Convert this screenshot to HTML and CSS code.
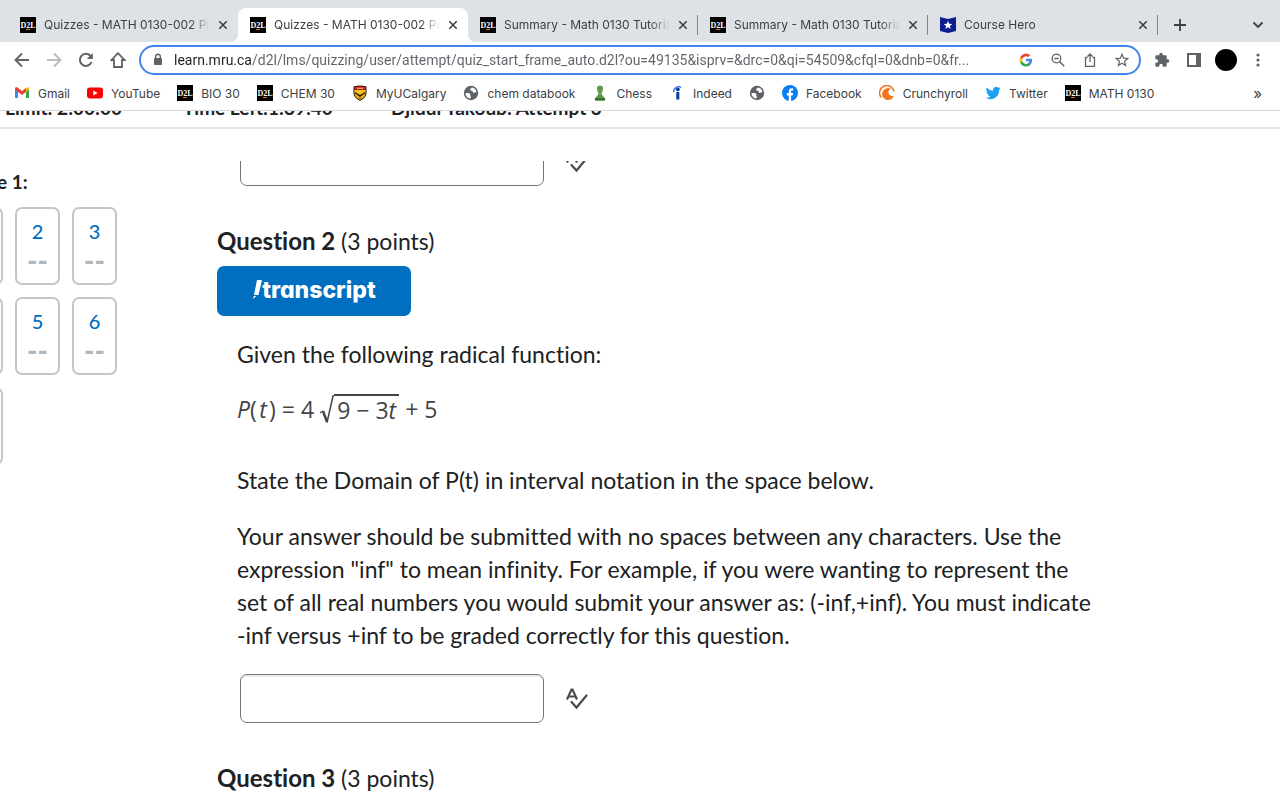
FILE: index.html
```html
<!DOCTYPE html>
<html lang="en">
<head>
  <meta charset="UTF-8" />
  <title>Quizzes - MATH 0130-002</title>
  <link rel="stylesheet" href="styles.css">
</head>
<body>

  <!-- Shared icons -->
  <svg class="sprite" aria-hidden="true">
    <symbol id="d2l" viewBox="0 0 16 16">
      <rect width="16" height="16" fill="#000"/>
      <text x="8" y="11" text-anchor="middle" font-family="Liberation Serif, serif" font-weight="bold" font-size="8" fill="#fff">D2L</text>
      <path d="M6 12.5h4" stroke="#e87511"/>
    </symbol>
    <symbol id="close" viewBox="0 0 10 10">
      <path d="M1.3 1.3l7.4 7.4M8.7 1.3L1.3 8.7" stroke="#3c4043" stroke-width="1.6"/>
    </symbol>
    <symbol id="globe" viewBox="0 0 16 16">
      <circle cx="8" cy="8" r="7.2" fill="#5f6368"/>
      <path d="M2.4 8.2c2.2-.4 4.2-.2 4.8.8.5 1-.4 1.5.3 2.3.6.7.3 1.7-.3 2.3C4.6 13.2 2.5 11 2.4 8.2zM8.8 2.5c-.2 1.2-1.8 1-1.7 2.2.1 1 1.5.6 2.2 1.3.7.6.3 1.6 1.3 1.9 1.1.3 1.4-.9 2.8-.8-.1-2.2-1.9-4.3-4.6-4.6z" fill="#fff"/>
    </symbol>
    <symbol id="spell" viewBox="0 0 24 24">
      <path d="M2 12.5L6.500 2.500h1L12 12.500M4 9.500h6" fill="none" stroke="#494c4e" stroke-width="2.2"/>
      <path d="M6.500 15l5 5.500L21.500 8.500" fill="none" stroke="#494c4e" stroke-width="2.2" stroke-linecap="round"/>
    </symbol>
  </svg>

  <!-- Tabs -->
  <nav class="tabs">
    <div class="tab">
      <svg class="favicon"><use href="#d2l"/></svg>
      <span class="tab-title">Quizzes - MATH 0130-002 Precalculus</span>
      <button class="close" aria-label="Close tab"><svg><use href="#close"/></svg></button>
    </div>
    <div class="tab active">
      <svg class="favicon"><use href="#d2l"/></svg>
      <span class="tab-title">Quizzes - MATH 0130-002 Precalculus</span>
      <button class="close" aria-label="Close tab"><svg><use href="#close"/></svg></button>
    </div>
    <div class="tab divided">
      <svg class="favicon"><use href="#d2l"/></svg>
      <span class="tab-title">Summary - Math 0130 Tutorial</span>
      <button class="close" aria-label="Close tab"><svg><use href="#close"/></svg></button>
    </div>
    <div class="tab divided">
      <svg class="favicon"><use href="#d2l"/></svg>
      <span class="tab-title">Summary - Math 0130 Tutorial</span>
      <button class="close" aria-label="Close tab"><svg><use href="#close"/></svg></button>
    </div>
    <div class="tab divided">
      <svg class="favicon" viewBox="0 0 16 16"><path d="M0 0l8 2 8-2v14l-8 2-8-2z" fill="#0c1f8f"/><path d="M8 3.800l1.200 2.900 3.100.2-2.400 2 .8 3L8 10.300l-2.700 1.600.8-3-2.400-2 3.100-.2z" fill="#fff"/></svg>
      <span class="tab-title">Course Hero</span>
      <button class="close" aria-label="Close tab"><svg><use href="#close"/></svg></button>
    </div>
    <button class="new-tab" aria-label="New tab"><svg viewBox="0 0 12 12"><path d="M6 0v12M0 6h12" stroke="#3c4043" stroke-width="1.8"/></svg></button>
    <button class="tab-search" aria-label="Search tabs"><svg viewBox="0 0 12 12"><path d="M1.500 3.500L6 8l4.500-4.500" fill="none" stroke="#3c4043" stroke-width="1.8"/></svg></button>
  </nav>

  <!-- Toolbar -->
  <div class="toolbar">
    <button class="tool" aria-label="Back"><svg viewBox="0 0 16 16"><path d="M15 8H2M8 1.500L1.500 8 8 14.500" fill="none" stroke="#5f6368" stroke-width="1.9"/></svg></button>
    <button class="tool" aria-label="Forward"><svg viewBox="0 0 16 16"><path d="M1 8h13M8 1.500L14.500 8 8 14.500" fill="none" stroke="#babcbe" stroke-width="1.9"/></svg></button>
    <button class="tool" aria-label="Reload"><svg viewBox="0 0 16 16"><path d="M13.500 10A6 6 0 1 1 12.300 3.800L14 5.500" fill="none" stroke="#5f6368" stroke-width="2"/><path d="M14.800 1v6h-6z" fill="#5f6368"/></svg></button>
    <button class="tool" aria-label="Home"><svg viewBox="0 0 16 16"><path d="M8 1.200L1.500 8H4v7h8V8h2.500z" fill="none" stroke="#5f6368" stroke-width="1.8"/></svg></button>
    <div class="omnibox">
      <svg class="lock" viewBox="0 0 10 14"><rect x="1" y="5" width="8" height="7" rx="1" fill="#5f6368"/><path d="M2.700 5.500V3.500a2.300 2.300 0 0 1 4.600 0v2" fill="none" stroke="#5f6368" stroke-width="1.4"/></svg>
      <input class="url" type="text" aria-label="Address" value="learn.mru.ca/d2l/lms/quizzing/user/attempt/quiz_start_frame_auto.d2l?ou=49135&amp;isprv=&amp;drc=0&amp;qi=54509&amp;cfql=0&amp;dnb=0&amp;fr...">
      <svg class="omni-icon" viewBox="0 0 24 24"><path d="M22.500 12.200c0-.8-.1-1.500-.2-2.200H12v4.300h5.900a5 5 0 0 1-2.200 3.300v2.800h3.600c2-1.900 3.200-4.800 3.200-8.200z" fill="#4285f4"/><path d="M12 23c3 0 5.500-1 7.300-2.600l-3.600-2.800a6.600 6.600 0 0 1-9.900-3.500H2.200V17A11 11 0 0 0 12 23z" fill="#34a853"/><path d="M5.800 14.100a6.600 6.600 0 0 1 0-4.200V7H2.200a11 11 0 0 0 0 9.900z" fill="#fbbc05"/><path d="M12 5.400c1.600 0 3.100.6 4.200 1.600l3.200-3.100A11 11 0 0 0 2.200 7l3.600 2.900A6.600 6.600 0 0 1 12 5.400z" fill="#ea4335"/></svg>
      <button class="omni-icon" aria-label="Zoom"><svg viewBox="0 0 14 14"><circle cx="5.500" cy="5.500" r="4.300" fill="none" stroke="#5f6368" stroke-width="1.3"/><path d="M8.700 8.700l4.600 4.600M3.300 5.500h4.400" stroke="#5f6368" stroke-width="1.5"/></svg></button>
      <button class="omni-icon" aria-label="Share"><svg viewBox="0 0 14 14"><path d="M4.500 4.500h-2v8.800h9V4.500h-2M7 9V1M4.500 3.500L7 1l2.500 2.500" fill="none" stroke="#5f6368" stroke-width="1.3"/></svg></button>
      <button class="omni-icon" aria-label="Bookmark"><svg viewBox="0 0 14 14"><path d="M7 1.300l1.600 3.900 4.200.3-3.200 2.700 1 4.200L7 10.200l-3.600 2.200 1-4.200L1.200 5.500l4.200-.3z" fill="none" stroke="#5f6368" stroke-width="1.2"/></svg></button>
    </div>
    <div class="actions">
      <button class="tool" aria-label="Extensions"><svg viewBox="0 0 24 24"><path d="M20.500 11H19V7a2 2 0 0 0-2-2h-4V3.500a2.500 2.500 0 0 0-5 0V5H4a2 2 0 0 0-2 2v3.800h1.500a2.700 2.700 0 0 1 0 5.400H2V20c0 1.100.9 2 2 2h3.800v-1.500a2.700 2.700 0 0 1 5.400 0V22H17a2 2 0 0 0 2-2v-4h1.500a2.500 2.500 0 0 0 0-5z" fill="#5f6368"/></svg></button>
      <button class="tool" aria-label="Side panel"><svg viewBox="0 0 16 16"><rect x="2" y="2" width="12" height="12" fill="none" stroke="#5f6368" stroke-width="2"/><path d="M10 2h4v12h-4z" fill="#5f6368"/></svg></button>
      <button class="avatar" aria-label="Profile"></button>
      <button class="tool" aria-label="Menu"><svg viewBox="0 0 16 16" fill="#5f6368"><circle cx="8" cy="3" r="1.600"/><circle cx="8" cy="8" r="1.600"/><circle cx="8" cy="13" r="1.600"/></svg></button>
    </div>
  </div>

  <!-- Bookmarks -->
  <nav class="bookmarks">
    <a href="#"><svg viewBox="0 0 16 16"><path d="M1 4v9h3V6z" fill="#4285f4"/><path d="M15 4v9h-3V6z" fill="#34a853"/><path d="M1 4.500V3.500C1 2.300 2.500 1.800 3.500 2.600L8 6l4-3v4L8 10 1 4.700z" fill="#ea4335"/><path d="M12 3l.5-.4c1-.8 2.500-.3 2.500 1v1L12 7z" fill="#fbbc04"/></svg>Gmail</a>
    <a href="#"><svg viewBox="0 0 16 16"><rect y="2.500" width="16" height="11" rx="3" fill="#f00"/><path d="M6.300 5.500v5l4.400-2.500z" fill="#fff"/></svg>YouTube</a>
    <a href="#"><svg><use href="#d2l"/></svg>BIO 30</a>
    <a href="#"><svg><use href="#d2l"/></svg>CHEM 30</a>
    <a href="#"><svg viewBox="0 0 16 16"><path d="M1.500 1.500Q8-.5 14.500 1.500V8c0 4-3.500 6-6.500 8-3-2-6.500-4-6.500-8z" fill="#3a1a12"/><path d="M2.500 2.300Q8 .7 13.500 2.300v2.400h-11z" fill="#d6202b"/><path d="M2.500 5h11v3c0 3-2.500 5-5.500 7-3-2-5.500-4-5.500-7z" fill="#f2c61f"/><path d="M3 7l5 3 5-3v1.500L8 12 3 8.500z" fill="#3a1a12"/><path d="M6 11.500l2 1.500 2-1.500L8 14.500z" fill="#b81b25"/><path d="M5 3.300h6" stroke="#f2c61f"/></svg>MyUCalgary</a>
    <a href="#"><svg><use href="#globe"/></svg>chem databook</a>
    <a href="#"><svg viewBox="0 0 16 16"><circle cx="8" cy="3.500" r="3" fill="#5d9948"/><path d="M4.500 6h7l-2 1.500c0 2 1 3.500 3 5V15.500h-9v-3c2-1.500 3-3 3-5z" fill="#5d9948"/><path d="M3 13h10v2.500H3z" fill="#3f6f34"/></svg>Chess</a>
    <a href="#"><svg viewBox="0 0 16 16"><circle cx="8.800" cy="4.300" r="1.900" fill="#003a9b"/><path d="M7.300 7h3v7.500h-3z" fill="#003a9b"/><path d="M4.500 7C5 2.500 8.500.5 12 2.500" fill="none" stroke="#2164f3" stroke-width="1.3"/></svg>Indeed</a>
    <a href="#" aria-label="Bookmark"><svg><use href="#globe"/></svg></a>
    <a href="#"><svg viewBox="0 0 16 16"><circle cx="8" cy="8" r="8" fill="#0a7cf5"/><path d="M6.800 16v-5.500H4.900V8h1.900V6.400c0-2 1.100-3.100 2.900-3.100.6 0 1.300.1 1.500.2v1.900h-1c-.9 0-1.100.5-1.100 1.100V8h2l-.4 2.500H9.100V16z" fill="#fff"/></svg>Facebook</a>
    <a href="#"><svg viewBox="0 0 16 16"><path d="M2.200 12.500A7.300 7.300 0 1 1 15 6.500" fill="none" stroke="#f47521" stroke-width="1.5"/><path d="M9 3a6 6 0 1 0 5.900 7.500A3.600 3.600 0 1 1 11.500 4 6 6 0 0 0 9 3z" fill="#f47521"/></svg>Crunchyroll</a>
    <a href="#"><svg viewBox="0 0 24 24"><path d="M23.500 5c-.8.400-1.700.6-2.600.7a4.600 4.600 0 0 0 2-2.500c-.9.500-1.900.9-2.900 1.100a4.600 4.600 0 0 0-7.900 4.200A13 13 0 0 1 2.600 3.700 4.600 4.600 0 0 0 4 9.900c-.7 0-1.400-.2-2-.6 0 2.300 1.600 4.200 3.700 4.600-.7.200-1.400.2-2.100.1a4.600 4.600 0 0 0 4.300 3.200A9.300 9.300 0 0 1 1 19.100 13.200 13.200 0 0 0 21.200 7.400c.9-.6 1.700-1.500 2.300-2.400z" fill="#1da1f2"/></svg>Twitter</a>
    <a href="#"><svg><use href="#d2l"/></svg>MATH 0130</a>
    <button class="more" aria-label="More bookmarks">»</button>
  </nav>

  <!-- Quiz page -->
  <header class="quiz-info">
    <div class="limit"><span>Time Limit: 2:00:00</span></div>
    <div class="left">Time Left:1:39:40</div>
    <div>Djidul Yakoub: Attempt 3</div>
  </header>

  <div class="quiz">
    <aside class="pages">
      <div class="pages-inner">
        <h3>Page 1:</h3>
        <div class="tiles">
          <a class="tile" href="#q1">1<span>--</span></a>
          <a class="tile" href="#q2">2<span>--</span></a>
          <a class="tile" href="#q3">3<span>--</span></a>
          <a class="tile" href="#q4">4<span>--</span></a>
          <a class="tile" href="#q5">5<span>--</span></a>
          <a class="tile" href="#q6">6<span>--</span></a>
          <a class="tile" href="#q7">7<span>--</span></a>
        </div>
      </div>
    </aside>

    <main class="questions">
      <div class="answer scrolled">
        <input type="text" aria-label="Answer for question 1">
        <button class="spell" aria-label="Check spelling"><svg><use href="#spell"/></svg></button>
      </div>

      <section id="q2">
        <h2>Question 2 <span>(3 points)</span></h2>
        <button class="transcript"><svg viewBox="0 0 10 20"><path d="M5 0h5L6.500 15H2z" fill="#fff"/><path d="M1.700 16h2.500L1.200 19z" fill="#fff"/></svg>transcript</button>
        <div class="body">
          <p>Given the following radical function:</p>
          <div class="formula">
            <span><i>P</i>(&#8202;<i>t</i>&#8202;)</span>
            <span>=</span>
            <span>4</span>
            <svg viewBox="0 0 14 30"><path d="M0 19l3-2" stroke="#444" stroke-width="1.2"/><path d="M3 17l4 11" stroke="#444" stroke-width="2.4"/><path d="M7 28.500L13 2h1" fill="none" stroke="#444" stroke-width="1.5"/></svg>
            <span class="radicand">9 − 3<i>t</i></span>
            <span>+</span>
            <span>5</span>
          </div>
          <p>State the Domain of P(t) in interval notation in the space below.</p>
          <p>Your answer should be submitted with no spaces between any characters. Use the expression "inf" to mean infinity. For example, if you were wanting to represent the set of all real numbers you would submit your answer as: (-inf,+inf). You must indicate -inf versus +inf to be graded correctly for this question.</p>
        </div>
        <div class="answer">
          <input type="text" aria-label="Answer for question 2">
          <button class="spell" aria-label="Check spelling"><svg><use href="#spell"/></svg></button>
        </div>
      </section>

      <section id="q3">
        <h2>Question 3 <span>(3 points)</span></h2>
      </section>
    </main>
  </div>

</body>
</html>
```
FILE: styles.css
```css
* {
  box-sizing: border-box;
}

body {
  margin: 0;
  height: 100vh;
  overflow: hidden;
  display: flex;
  flex-direction: column;
  background: #fff;
  color: #202122;
  font-family: Lato, sans-serif;
  font-variant-ligatures: none;
}

button {
  border: none;
  padding: 0;
  background: none;
  font: inherit;
  cursor: pointer;
}

.sprite {
  display: none;
}

/* Browser tabs */
.tabs {
  display: flex;
  flex-shrink: 0;
  height: 42px;
  padding: 8px 16px 0 8px;
  background: #dee1e6;
  font: 12px Inter, sans-serif;
  color: #3c4043;
}

.tab {
  position: relative;
  flex: 0 1 230px;
  min-width: 0;
  display: flex;
  align-items: center;
  gap: 8px;
  padding: 0 10px 1px 12px;
}

.tab.active {
  background: #fff;
  border-radius: 8px 8px 0 0;
}

.tab.active::before,
.tab.active::after {
  content: "";
  position: absolute;
  bottom: 0;
  width: 8px;
  height: 8px;
}

.tab.active::before {
  left: -8px;
  background: radial-gradient(circle at 0 0, transparent 8px, #fff 8px);
}

.tab.active::after {
  right: -8px;
  background: radial-gradient(circle at 100% 0, transparent 8px, #fff 8px);
}

.tab.divided {
  background: linear-gradient(#808387, #808387) right center / 1px 20px no-repeat;
}

.favicon {
  flex: none;
  width: 16px;
  height: 16px;
}

.tab-title {
  flex: 1;
  overflow: hidden;
  white-space: nowrap;
  mask-image: linear-gradient(to left, transparent, #000 20px);
}

.close svg {
  display: block;
  width: 10px;
  height: 10px;
}

.new-tab {
  margin-left: 16px;
}

.tab-search {
  margin-left: auto;
}

.new-tab svg,
.tab-search svg {
  display: block;
  width: 12px;
  height: 12px;
}

/* Toolbar */
.toolbar {
  display: flex;
  flex-shrink: 0;
  align-items: center;
  gap: 16px;
  height: 36px;
  padding: 0 14px;
}

.tool,
.tool svg {
  display: block;
  width: 16px;
  height: 16px;
}

.omnibox {
  flex: 1;
  min-width: 0;
  display: flex;
  align-items: center;
  gap: 18px;
  height: 30px;
  margin: 0 -3px;
  padding: 0 10px 0 12px;
  border: 2px solid #4285e8;
  border-radius: 15px;
}

.lock {
  flex: none;
  width: 10px;
  height: 14px;
}

.url {
  flex: 1;
  min-width: 0;
  margin-left: -7px;
  padding: 0;
  border: none;
  outline: none;
  font: 14px Roboto, sans-serif;
  color: transparent;
  background: linear-gradient(90deg, #202124 77px, #5f6368 77px);
  background-clip: text;
}

.omni-icon,
.omni-icon svg {
  display: block;
  flex: none;
  width: 14px;
  height: 14px;
}

.actions {
  display: flex;
  align-items: center;
  gap: 16px;
}

.avatar {
  width: 22px;
  height: 22px;
  margin: 0 -3px;
  border-radius: 50%;
  background: #000;
}

/* Bookmarks bar */
.bookmarks {
  display: flex;
  flex-shrink: 0;
  align-items: center;
  gap: 17px;
  height: 33px;
  padding: 0 18px 2px 14px;
  border-bottom: 1px solid #d5d8dc;
  font: 12px Inter, sans-serif;
}

.bookmarks a {
  display: flex;
  align-items: center;
  gap: 8px;
  color: #3c4043;
  text-decoration: none;
}

.bookmarks svg {
  width: 16px;
  height: 16px;
}

.more {
  margin-left: auto;
  font-size: 15px;
  color: #3c4043;
}

/* Quiz info, scrolled partly under the bookmarks bar */
.quiz-info {
  display: flex;
  flex-shrink: 0;
  align-items: flex-end;
  height: 18px;
  padding-bottom: 8px;
  overflow: hidden;
  border-bottom: 2px solid #dfe3e7;
  font-size: 19px;
  font-weight: bold;
  line-height: 22px;
  white-space: nowrap;
}

.limit {
  display: flex;
  justify-content: flex-end;
  width: 122px;
  margin-right: 61px;
}

.left {
  width: 208px;
}

.quiz {
  display: flex;
  flex: 1;
  min-height: 0;
}

/* Page navigation, scrolled partly off the left edge */
.pages {
  flex: none;
  display: flex;
  justify-content: flex-end;
  width: 117px;
  padding-top: 41px;
  overflow: hidden;
}

.pages-inner {
  flex: none;
}

.pages h3 {
  margin: 0 0 13px;
  padding-left: 8px;
  font-size: 19px;
  line-height: 24px;
}

.tiles {
  display: grid;
  grid-template-columns: repeat(3, 45px);
  gap: 12px;
}

.tile {
  display: flex;
  flex-direction: column;
  align-items: center;
  height: 78px;
  padding-top: 10px;
  border: 2px solid #c2c7cc;
  border-radius: 7px;
  color: #006fbf;
  font-size: 20px;
  font-weight: 500;
  line-height: 24px;
  text-decoration: none;
}

.tile span {
  margin-top: 5px;
  color: #b1b7bd;
  font-size: 28px;
  font-weight: 900;
}

/* Questions */
.questions {
  flex: 1;
  min-width: 0;
  padding: 32px 180px 0 100px;
}

.answer {
  display: flex;
  align-items: center;
  gap: 21px;
  padding-left: 23px;
}

.answer input {
  flex: none;
  width: 304px;
  height: 49px;
  padding: 0 16px;
  border: 1px solid #6e7477;
  border-radius: 7px;
  box-shadow: inset 0 2px 0 #eceef0;
  font: 22px Lato, sans-serif;
}

.answer.scrolled {
  align-items: flex-end;
  height: 25px;
  overflow: hidden;
}

.answer.scrolled .spell {
  margin-bottom: 12px;
}

.spell,
.spell svg {
  display: block;
  width: 24px;
  height: 24px;
}

h2 {
  margin: 38px 0 8px;
  font-size: 24px;
  line-height: 33px;
}

h2 span {
  font-size: 23px;
  font-weight: normal;
}

.transcript {
  display: flex;
  align-items: center;
  justify-content: center;
  width: 194px;
  height: 50px;
  padding-bottom: 3px;
  border-radius: 7px;
  background: #006fbf;
  color: #fff;
  font: 800 23px Inter, sans-serif;
  font-feature-settings: "cv11";
}

.transcript svg {
  width: 10px;
  height: 20px;
}

.body {
  padding: 22px 0 0 20px;
}

.body p {
  max-width: 860px;
  margin: 0 0 23px;
  font-size: 23px;
  line-height: 33px;
}

.body p:last-child {
  margin-bottom: 22px;
}

.formula {
  display: flex;
  align-items: center;
  height: 29px;
  margin-bottom: 41px;
  font: 23px "Open Sans", sans-serif;
  color: #444;
}

.formula span {
  margin-right: 6px;
}

.formula svg {
  width: 14px;
  height: 30px;
}

.formula .radicand {
  padding: 0 3px;
  border-top: 2px solid #444;
  line-height: 28px;
}
```
